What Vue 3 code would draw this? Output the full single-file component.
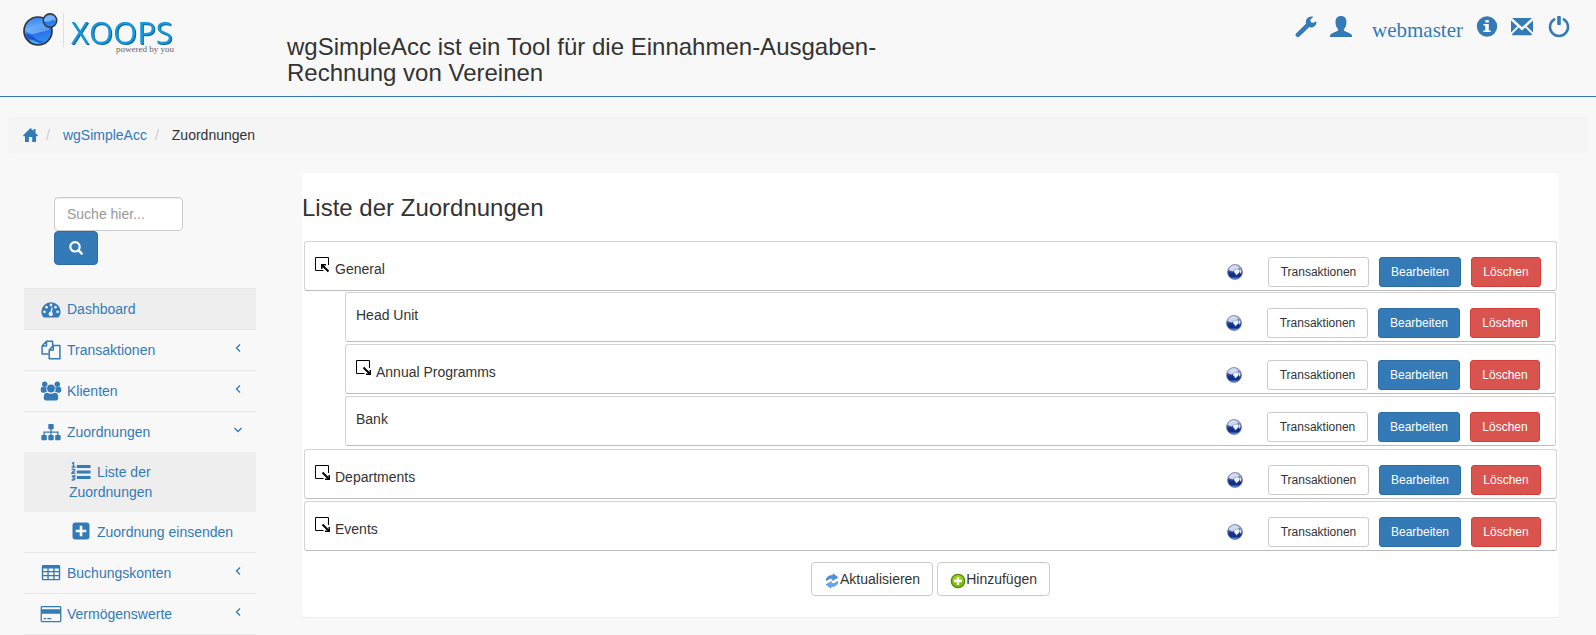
<script setup>
import { ref } from 'vue'

const query = ref('')

const menuTop = [
  { label: 'Dashboard', icon: 'dashboard', active: true, arrow: '' },
  { label: 'Transaktionen', icon: 'copy', arrow: 'left' },
  { label: 'Klienten', icon: 'users', arrow: 'left' },
  {
    label: 'Zuordnungen',
    icon: 'sitemap',
    arrow: 'down',
    children: [
      { label: 'Liste der Zuordnungen', icon: 'list', active: true },
      { label: 'Zuordnung einsenden', icon: 'plus' },
    ],
  },
  { label: 'Buchungskonten', icon: 'table', arrow: 'left' },
  { label: 'Vermögenswerte', icon: 'card', arrow: 'left' },
]

const icons = {
  dashboard:
    '<path fill-rule="evenodd" d="M4.600 20.500C3 18.700 2.400 16.700 2.400 14.800A9.600 9.600 0 0 1 21.600 14.800C21.600 16.700 21 18.700 19.400 20.500ZM5.400 13.400a1.400 1.400 0 1 0 .01 0ZM7.500 8.800a1.400 1.400 0 1 0 .01 0ZM12 6.600a1.400 1.400 0 1 0 .01 0ZM16.500 8.800a1.400 1.400 0 1 0 .01 0ZM18.600 13.400a1.400 1.400 0 1 0 .01 0ZM12.400 10.400L11.400 14.800A2.200 2.200 0 1 0 13 15.200L13.700 10.700Z"/>',
  copy:
    '<g fill="none" stroke="currentColor" stroke-width="1.500" stroke-linejoin="round"><path d="M9.600 16H3.100V8L7.500 3.300H13.600V7.500M7.500 3.300V8H3.100"/><path d="M14.300 7.500H20.900V20.700H10.200V12L14.300 7.500V12H10.200"/></g>',
  users:
    '<circle cx="5.700" cy="5.300" r="2.700"/><circle cx="18.300" cy="5.300" r="2.700"/><path d="M1.700 11.300c0-2.500.700-3.600 2-3.600 1 0 1.800.9 4.300.5-.9 1.700-.9 3.500.2 4.900-1.300 0-2 .1-2.600.6H4c-1.600 0-2.300-.9-2.300-2.400ZM22.300 11.300c0-2.500-.7-3.600-2-3.600-1 0-1.800.9-4.300.5.9 1.700.9 3.500-.2 4.900 1.300 0 2 .1 2.600.6H20c1.600 0 2.300-.9 2.300-2.400Z"/><circle cx="12" cy="9.500" r="3.900"/><path d="M4.700 18.700c0-3.100 1-5 3.400-5 1 0 1.700 1.100 3.900 1.100s2.900-1.100 3.900-1.100c2.400 0 3.400 1.900 3.400 5 0 2-1.300 2.800-3.100 2.800H7.800c-1.800 0-3.100-.8-3.100-2.800Z"/>',
  sitemap:
    '<rect x="9.300" y="4" width="5.400" height="5.200" rx=".8"/><rect x="2.400" y="15" width="5.400" height="5.200" rx=".8"/><rect x="9.300" y="15" width="5.400" height="5.200" rx=".8"/><rect x="16.200" y="15" width="5.400" height="5.200" rx=".8"/><path fill="none" stroke="currentColor" stroke-width="1.300" d="M12 9v6M5.100 15V12.100H18.900V15"/>',
  list:
    '<path d="M7.800 5h13.700v3H7.800ZM7.800 10.500h13.700v3H7.800ZM7.800 16h13.700v3H7.800Z"/><path fill="none" stroke="currentColor" stroke-width="1.400" d="M3 3.600l1.500-.9V6.900M2.600 7h3.800M2.800 9.800c.6-.9 3-.9 3 .4 0 1.100-2.900 1.500-2.900 3h3.400M2.800 16h3l-1.500 1.700c2.300 0 2.200 3-1.700 2.200"/>',
  plus:
    '<path fill-rule="evenodd" d="M6.500 2.500h11a3 3 0 0 1 3 3v11a3 3 0 0 1-3 3h-11a3 3 0 0 1-3-3v-11a3 3 0 0 1 3-3ZM10.700 5.700v4h-4v2.600h4v4h2.600v-4h4v-2.600h-4v-4Z"/>',
  table:
    '<path fill-rule="evenodd" d="M4.300 4h15.400c1 0 1.500.6 1.500 1.500v12.300c0 1-.6 1.500-1.500 1.500H4.300c-1 0-1.500-.6-1.500-1.500V5.500C2.800 4.600 3.300 4 4.300 4ZM4.200 7.500v2.600h4.200V7.500ZM9.700 7.500v2.600h4.600V7.500ZM15.600 7.500v2.600h4.200V7.500ZM4.200 11.300v2.700h4.200v-2.700ZM9.700 11.300v2.700h4.600v-2.700ZM15.600 11.300v2.700h4.200v-2.700ZM4.200 15.200v2.700h4.200v-2.700ZM9.700 15.200v2.700h4.600v-2.700ZM15.600 15.200v2.700h4.200v-2.700Z"/>',
  card:
    '<path fill-rule="evenodd" d="M3.200 4h17.600c1 0 1.600.6 1.600 1.600v13c0 1-.6 1.600-1.600 1.600H3.200c-1 0-1.600-.6-1.600-1.600v-13C1.600 4.600 2.200 4 3.200 4ZM2.900 5.300v2h18.200v-2ZM2.900 11.800V18.900h18.200v-7.100ZM4.500 15.900h2.600v1.400H4.500ZM8.300 15.900h4v1.400h-4Z"/>',
}

const rows = [
  {
    name: 'General',
    state: 'open',
    children: [
      { name: 'Head Unit', state: '' },
      { name: 'Annual Programms', state: 'closed' },
      { name: 'Bank', state: '' },
    ],
  },
  { name: 'Departments', state: 'closed' },
  { name: 'Events', state: 'closed' },
]

const flatRows = rows.flatMap((row) => [
  { ...row, level: 0 },
  ...(row.children || []).map((child, i, all) => ({
    ...child,
    level: 1,
    first: i === 0,
    last: i === all.length - 1,
  })),
])
</script>

<template>
  <div class="page">
    <header class="header">
      <a class="logo" href="#" aria-label="XOOPS">
        <svg width="160" height="44" viewBox="0 0 160 44">
          <defs>
            <linearGradient id="ball" x1="0" y1="0" x2="0.300" y2="1">
              <stop offset="0" stop-color="#2f7cec" />
              <stop offset="0.450" stop-color="#5fa6fc" />
              <stop offset="0.600" stop-color="#2a6fe4" />
              <stop offset="1" stop-color="#2f8df5" />
            </linearGradient>
            <linearGradient id="gloss" x1="0" y1="0" x2="0" y2="1">
              <stop offset="0" stop-color="#3486f3" />
              <stop offset="1" stop-color="#8cc4ff" />
            </linearGradient>
          </defs>
          <circle cx="15" cy="18" r="14" fill="url(#ball)" stroke="#34363b" stroke-width="1.700" />
          <path d="M2.500 17C3 9 9 5 15 5c7 0 11.500 5 11.500 11C23 19 18 18 14 20 9 22 5 21 2.500 17Z" fill="url(#gloss)" opacity=".7" />
          <path d="M3 20c4 3 6 2 9 5 2 2 5 4 9 3-5 4-16 3-18-8Z" fill="#1a48c0" opacity=".75" />
          <path d="M6 26q4 1 11 4-7 2-11-4Z" fill="#50c8ff" opacity=".8" />
          <circle cx="27" cy="7.500" r="6.800" fill="url(#ball)" stroke="#34363b" stroke-width="1.400" />
          <path d="M21 8q1-5 6-5.500 5 .5 6 5-4-1-6 1-3 1-6-.5Z" fill="#82bdff" opacity=".75" />
          <path d="M40.500 0V34" stroke="#dfdfdf" />
          <text class="logo-name" x="48" y="31">XOOPS</text>
          <text class="logo-tag" x="93" y="39">powered by you</text>
        </svg>
      </a>
      <h3 class="slogan">wgSimpleAcc ist ein Tool für die Einnahmen-Ausgaben-Rechnung von Vereinen</h3>
      <nav class="user-nav" aria-label="Benutzer">
        <a href="#" aria-label="Administration">
          <svg width="22" height="22" viewBox="0 0 22 22"><path d="M21.400 5.300c.4 2.700-1 5.200-3.600 5.900-1.300.4-2.500.3-3.500-.2L4.400 20.600c-.9.900-2.100.9-2.900 0l-.4-.4c-.8-.8-.8-2 0-2.800L11 7.700C10.100 4 12.600.4 16.800.4l1.600.4-3.100 3 .6 2.400 2.500.6Z" /></svg>
        </a>
        <a class="account" href="#">
          <svg width="22" height="22" viewBox="0 0 22 22"><path d="M11 0c3.600 0 5.500 2.300 5.500 6 0 2.800-.8 5.400-2.300 6.800-.5.500-.5 1.600.1 2 2.400 1.600 5.600 2.100 7.200 3.800.4.600.5 1.500.5 2.400H0c0-.9.100-1.800.5-2.400 1.600-1.700 4.800-2.200 7.200-3.800.6-.4.600-1.500.1-2C6.300 11.400 5.500 8.800 5.500 6c0-3.700 1.900-6 5.500-6Z" /></svg>
          <span>webmaster</span>
        </a>
        <a href="#" aria-label="Info">
          <svg width="22" height="22" viewBox="0 0 22 22"><path fill-rule="evenodd" d="M11 .3a10.200 10.200 0 1 1 0 20.400A10.200 10.200 0 0 1 11 .3ZM9.300 4v2.600h3.500V4ZM7.400 8v1.600h1.800v4.800H7.200V16h7.600v-1.600h-2V8Z" /></svg>
        </a>
        <a href="#" aria-label="Nachrichten">
          <svg width="22" height="22" viewBox="0 0 22 22"><path d="M1 2h20l-10 9ZM0 4.500 6.300 10.200 0 16.500ZM22 4.500v12L15.700 10.200ZM7.700 11.500 11 14.400l3.300-2.900 6.500 6.500v1.200H1.200V18Z" /></svg>
        </a>
        <a class="power" href="#" aria-label="Abmelden">
          <svg width="22" height="22" viewBox="0 0 22 22"><path d="M6.200 3.400A9 9 0 1 0 15.800 3.400" fill="none" stroke="currentColor" stroke-width="2.500" stroke-linecap="round" /><rect x="9.200" y="0" width="3.600" height="9" rx=".7" /></svg>
        </a>
      </nav>
    </header>

    <nav class="breadcrumb" aria-label="Brotkrumen">
      <a class="home" href="#" aria-label="Startseite">
        <svg width="15" height="14" viewBox="0 0 15 14"><path d="M7.500 0 10.500 2.900V1h2v3.900L15 7.400 14.200 8.200H13V14H9.200V9H5.900V14H2V8.200H.8L0 7.400Z" /></svg>
      </a>
      <span class="slash">/</span>
      <a class="crumb" href="#">wgSimpleAcc</a>
      <span class="slash">/</span>
      <span class="crumb">Zuordnungen</span>
    </nav>

    <div class="columns">
      <aside class="sidebar">
        <form class="search" role="search" @submit.prevent>
          <input v-model="query" type="text" placeholder="Suche hier..." aria-label="Suche hier..." />
          <button type="submit" aria-label="Suchen">
            <svg width="14" height="14" viewBox="0 0 14 14"><circle cx="6" cy="5.800" r="4.700" fill="none" stroke="currentColor" stroke-width="2.200" /><path d="m9.400 9.200 3.300 3.400" stroke="currentColor" stroke-width="2.400" stroke-linecap="round" /></svg>
          </button>
        </form>
        <ul class="menu">
          <li v-for="item in menuTop" :key="item.label">
            <a class="menu-link" :class="{ active: item.active }" href="#">
              <svg class="menu-icon" viewBox="0 0 24 24" v-html="icons[item.icon]"></svg>
              <span>{{ item.label }}</span>
              <svg v-if="item.arrow" class="arrow" :class="item.arrow" viewBox="0 0 10 10"><path d="M7 1.500 3.500 5 7 8.500" /></svg>
            </a>
            <ul v-if="item.children" class="submenu">
              <li v-for="child in item.children" :key="child.label">
                <a class="sub-link" :class="{ active: child.active }" href="#">
                  <svg class="menu-icon" viewBox="0 0 24 24" v-html="icons[child.icon]"></svg>
                  {{ child.label }}
                </a>
              </li>
            </ul>
          </li>
        </ul>
      </aside>

      <main class="panel">
        <h3>Liste der Zuordnungen</h3>
        <ul class="tree">
          <li
            v-for="row in flatRows"
            :key="row.name"
            class="row"
            :class="{ nested: row.level, first: row.first, last: row.last }"
          >
            <div class="label" :class="{ branch: row.state }">
              <button v-if="row.state" class="toggle" type="button" :aria-label="row.name + ' umschalten'">
                <svg width="16" height="16" viewBox="0 0 16 16">
                  <path d="M8.500 13.500H.5V.5H13.500V8" fill="none" stroke="#000" />
                  <template v-if="row.state === 'open'">
                    <path d="M8 9 13.500 14.500" stroke="#000" stroke-width="2" />
                    <path d="M6 7H11V8.500H9V9L7.500 10.500V12H6Z" />
                  </template>
                  <template v-else>
                    <path d="M7.500 7.500 13 13" stroke="#000" stroke-width="2" />
                    <path d="M15 10V15H10V13.500H12L13.500 12V10Z" />
                  </template>
                </svg>
              </button>
              <span>{{ row.name }}</span>
            </div>
            <div class="actions">
              <svg class="globe" width="16" height="16" viewBox="0 0 16 16" role="img" aria-label="Online">
                <defs>
                  <linearGradient id="sea" x1="0" y1="0" x2="0" y2="1">
                    <stop offset="0" stop-color="#b4bfdc" />
                    <stop offset=".35" stop-color="#6b80b8" />
                    <stop offset=".55" stop-color="#1b3785" />
                    <stop offset=".8" stop-color="#0c2f8e" />
                    <stop offset="1" stop-color="#7d9bdc" />
                  </linearGradient>
                </defs>
                <circle cx="8" cy="8" r="7.500" fill="url(#sea)" stroke="#6f80b0" stroke-width=".8" />
                <path d="M1.500 5.500Q4 1 8.500 1.200l4 2-2.500 2-2.500.5-1.500 1.800-2-.5Z" fill="#dfe4f0" opacity=".85" />
                <path d="M7.500 6 11.500 5.200l1.300 1.600-.8 2.200-1.500 1-1 1.500-1.200-2L7 8Z" fill="#eef2fb" />
                <path d="m13 5 1.500 2-.5 3-1.200-2Z" fill="#dfe6f5" />
              </svg>
              <a class="btn plain" href="#">Transaktionen</a>
              <a class="btn edit" href="#">Bearbeiten</a>
              <a class="btn remove" href="#">Löschen</a>
            </div>
          </li>
        </ul>
        <div class="footer-actions">
          <button type="button">
            <svg width="16" height="16" viewBox="0 0 16 16">
              <path d="M2 7.200C2.500 3.800 5.500 2 9 2.600V.8L14 4.400 8.600 7.500V5.600C6.500 5.100 4.500 5.600 3.600 7.200Z" fill="#4e8fe2" stroke="#3770c5" stroke-width=".5" />
              <path d="M14 8.800c-.5 3.400-3.500 5.200-7 4.600v1.800L2 11.600l5.400-3.100v1.900c2.100.5 4.100 0 5-1.600Z" fill="#66a5ef" stroke="#4280d4" stroke-width=".5" />
            </svg>
            <span>Aktualisieren</span>
          </button>
          <button type="button">
            <svg width="16" height="16" viewBox="0 0 16 16">
              <circle cx="8" cy="8" r="6.700" fill="#80c000" stroke="#4c8b0c" stroke-width="1.200" />
              <path d="M2.500 7.500a5.500 5.500 0 0 1 11 0q-5.500 2-11 0Z" fill="#a5d93c" opacity=".6" />
              <path d="M8 4v8M4 8h8" stroke="#fff" stroke-width="2.400" />
            </svg>
            <span>Hinzufügen</span>
          </button>
        </div>
      </main>
    </div>
  </div>
</template>

<style>
body {
  margin: 0;
  background: #f8f8f8;
}
</style>

<style scoped>
* {
  box-sizing: border-box;
}
.page {
  color: #333;
  font: 14px/20px "Liberation Sans", Arial, sans-serif;
}
a {
  color: #337ab7;
  text-decoration: none;
}
svg {
  display: block;
  fill: currentColor;
}
ul {
  list-style: none;
  margin: 0;
  padding: 0;
}
h3 {
  margin: 0;
  font-size: 24px;
  line-height: 26px;
  font-weight: 400;
}

.header {
  display: grid;
  grid-template-columns: 264px minmax(0, 635px) 1fr;
  align-items: start;
  padding: 0 26px 10px 23px;
  border-bottom: 1px solid #337ab7;
}
.logo {
  padding-top: 13px;
}
.logo-name {
  font: 31px "Open Sans", sans-serif;
  fill: #1598dc;
  filter: drop-shadow(1px 1px 0 #11659a);
}
.logo-tag {
  font: 9px "Liberation Serif", serif;
  fill: #666;
}
.slogan {
  padding-top: 34px;
}
.user-nav {
  display: flex;
  justify-content: flex-end;
  gap: 13px;
  padding-top: 16px;
}
.power {
  padding-left: 2px;
}
.account {
  display: flex;
  gap: 20px;
  font: 21px/28px "Liberation Serif", "Times New Roman", serif;
}

.breadcrumb {
  display: flex;
  align-items: center;
  margin: 20px 8px;
  padding: 8px 15px;
  border-radius: 4px;
  background: #f5f5f5;
}
.slash {
  padding: 0 8px;
  color: #ccc;
}
.crumb {
  padding-left: 5px;
}

.columns {
  display: grid;
  grid-template-columns: 232px minmax(0, 1fr);
  gap: 46px;
  align-items: start;
  padding: 0 37px 0 24px;
}
.sidebar {
  padding-top: 24px;
}
.search {
  padding: 0 30px 23px;
}
.search input {
  display: block;
  width: 129px;
  height: 34px;
  padding: 6px 12px;
  border: 1px solid #ccc;
  border-radius: 4px;
  background: #fff;
  box-shadow: inset 0 1px 1px rgba(0, 0, 0, 0.075);
  color: #555;
  font: inherit;
}
.search input::placeholder {
  color: #999;
  opacity: 1;
}
.search button {
  display: grid;
  place-items: center;
  width: 44px;
  height: 34px;
  padding: 0;
  border: 1px solid #2e6da4;
  border-radius: 4px;
  background: #337ab7;
  color: #fff;
}
.menu {
  border-top: 1px solid #e7e7e7;
}
.menu > li {
  border-bottom: 1px solid #e7e7e7;
}
.menu-link {
  display: flex;
  align-items: center;
  gap: 4px;
  height: 40px;
  padding: 0 13px 0 15px;
}
.menu-icon {
  flex: none;
  width: 24px;
  height: 24px;
}
.active {
  background: #eee;
}
.arrow {
  width: 10px;
  height: 10px;
  margin: 0 0 5px auto;
}
.arrow path {
  fill: none;
  stroke: currentColor;
  stroke-width: 1.3;
}
.arrow.down {
  transform: rotate(-90deg);
}
.sub-link {
  display: block;
  padding: 10px 20px 10px 45px;
}
.sub-link .menu-icon {
  display: inline-block;
  margin: -5px 0 -3px;
  vertical-align: middle;
}

.panel {
  padding: 22px 2px 21px;
  border-radius: 4px;
  background: #fff;
  box-shadow: 0 1px 1px rgba(0, 0, 0, 0.05);
}
.panel h3 {
  margin: 0 -2px 20px;
}
.row {
  display: flex;
  justify-content: space-between;
  align-items: flex-start;
  margin-bottom: 2px;
  padding: 0 15px 3px 10px;
  border: 1px solid #d4d4d4;
  border-bottom-color: #bcbcbc;
  border-radius: 3px;
}
.nested {
  margin-left: 41px;
  margin-right: 1px;
}
.nested.first {
  margin-top: -1px;
}
.nested.last {
  margin-bottom: 3px;
}
.label {
  display: flex;
  gap: 4px;
  padding-top: 12px;
}
.label.branch {
  padding-top: 15px;
}
.branch span {
  padding-top: 2px;
}
.toggle {
  width: 16px;
  height: 16px;
  padding: 0;
  border: 0;
  background: none;
  color: #000;
}
.actions {
  display: flex;
  align-items: center;
  gap: 10px;
  padding-top: 15px;
}
.globe {
  margin-right: 15px;
}
.btn {
  padding: 5px 10px;
  border: 1px solid;
  border-radius: 3px;
  color: #fff;
  font-size: 12px;
  line-height: 18px;
  text-align: center;
}
.plain {
  min-width: 101px;
  border-color: #ccc;
  color: #333;
}
.edit {
  min-width: 82px;
  border-color: #2e6da4;
  background: #337ab7;
}
.remove {
  min-width: 70px;
  border-color: #d43f3a;
  background: #d9534f;
}
.footer-actions {
  display: flex;
  justify-content: center;
  gap: 4px;
  padding-top: 9px;
}
.footer-actions button {
  display: flex;
  align-items: center;
  height: 34px;
  padding: 0 12px;
  border: 1px solid #ccc;
  border-radius: 4px;
  background: #fff;
  color: #333;
  font: inherit;
}
.footer-actions svg {
  margin-top: 4px;
}
</style>
